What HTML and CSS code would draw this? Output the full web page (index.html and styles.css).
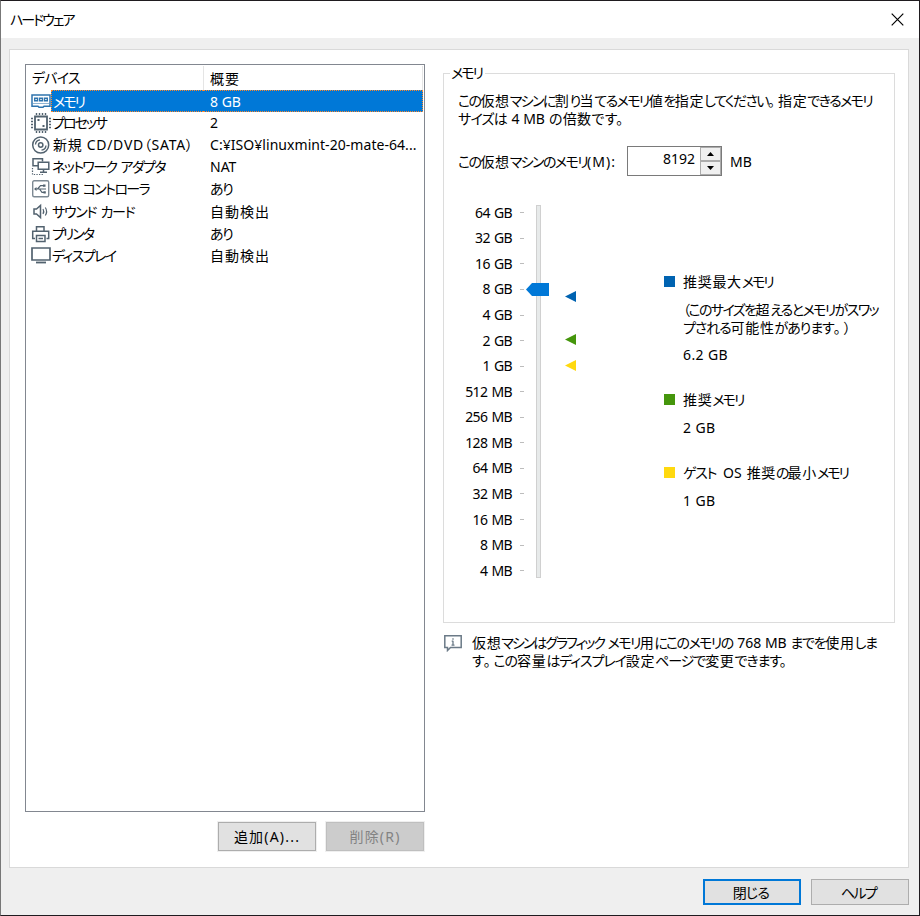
FILE: index.html
```html
<!DOCTYPE html>
<html lang="ja">
<head>
  <meta charset="UTF-8" />
  <title>ハードウェア</title>
  <link rel="stylesheet" href="styles.css">
</head>
<body>
  <div class="window">
    <header class="titlebar">
      <span class="kana">ハードウェア</span>
      <svg width="13" height="13" viewBox="0 0 13 13"><path d="M.7.7l11.6 11.6M12.3.7L.7 12.3" stroke="#000" stroke-width="1.2" fill="none"/></svg>
    </header>

    <main class="panel">
      <section class="left">
        <div class="list">
          <div class="row head">
            <div class="name loose">デバイス</div>
            <div class="value kanji">概要</div>
          </div>
          <div class="row selected">
            <svg class="icon" width="20" height="22" viewBox="0 0 20 22"><path d="M1 5h18v11.2h-6l-1 1H8l-1-1H1z" fill="#fff" stroke="#2f74ad" stroke-width="1.5"/><path d="M3.7 8.2h2.8v2.6H3.7zM8.6 8.2h2.8v2.6H8.6zM13.5 8.2h2.8v2.6h-2.8z" fill="#fff" stroke="#2f74ad" stroke-width="1.4"/><path d="M2 13.5h16" stroke="#8fb4d3"/></svg>
            <div class="name kana">メモリ</div>
            <div class="value">8 GB</div>
          </div>
          <div class="row">
            <svg class="icon" width="20" height="22" viewBox="0 0 20 22"><path d="M4 4.5h12v13H4z" fill="#fff" stroke="#52626f" stroke-width="1.8"/><path d="M5.5 1v2M8.5 1v2M11.5 1v2M14.5 1v2M5.5 19v2M8.5 19v2M11.5 19v2M14.5 19v2M0 6.5h2M0 9.5h2M0 12.5h2M0 15.5h2M18 6.5h2M18 9.5h2M18 12.5h2M18 15.5h2" stroke="#52626f" stroke-width="1.4"/><path d="M6.5 7h2v2h-2zM11.5 13h2v2h-2z" fill="#52626f"/></svg>
            <div class="name kana">プロセッサ</div>
            <div class="value">2</div>
          </div>
          <div class="row">
            <svg class="icon" width="20" height="22" viewBox="0 0 20 22"><g fill="none" stroke="#52626f"><circle cx="9.7" cy="11" r="8" stroke-width="1.5"/><circle cx="9.7" cy="11" r="2.2" stroke-width="1.5"/><path d="M4.5 10.5a5 5 0 0 1 4.5-4.6M15 11.5a5 5 0 0 1-4.5 4.6" stroke-width="1.3"/></g></svg>
            <div class="name drive">新規 CD/DVD（SATA）</div>
            <div class="value path">C:¥ISO¥linuxmint-20-mate-64...</div>
          </div>
          <div class="row">
            <svg class="icon" width="20" height="22" viewBox="0 0 20 22"><g fill="none" stroke="#52626f" stroke-width="1.5"><path d="M7 9.7H2V2.8h9.5v2.7"/><path d="M7.2 6.2h10.6v7H7.2zM12.5 13v3M9 16.2h7"/><path d="M1.5 12v6.5h11" stroke-width="1.2" stroke-dasharray="1.3 1.3"/></g></svg>
            <div class="name tight spaced">ネットワーク アダプタ</div>
            <div class="value">NAT</div>
          </div>
          <div class="row">
            <svg class="icon" width="20" height="22" viewBox="0 0 20 22"><rect x="1.7" y="2.8" width="16" height="16" rx="1.5" fill="#fff" stroke="#7d8993" stroke-width="1.4"/><path d="M4 11h11M6.5 11l3-3.3h3M8.5 11l2.5 3.3h2" fill="none" stroke="#52626f" stroke-width="1.2"/><path d="M5.5 9v4L3 11zM12 6.5h2.5v2.3H12zM12.5 13.2h2.3v2.3h-2.3z" fill="#52626f"/></svg>
            <div class="name">USB <span class="tight">コントローラ</span></div>
            <div class="value tight">あり</div>
          </div>
          <div class="row">
            <svg class="icon" width="20" height="22" viewBox="0 0 20 22"><g fill="none" stroke="#52626f"><path d="M3 8h2.5l4-3.5v12l-4-3.5H3z" stroke-width="1.5"/><path d="M12 8q1.5 2.5 0 5M14.3 6.5q2.6 4 0 8" stroke-width="1.2"/></g></svg>
            <div class="name medium spaced">サウンド カード</div>
            <div class="value kanji">自動検出</div>
          </div>
          <div class="row">
            <svg class="icon" width="20" height="22" viewBox="0 0 20 22"><g fill="#fff" stroke="#52626f" stroke-width="1.5"><path d="M5.5 8V3.7h7.5V8"/><path d="M4 15.5H1.7V8.2h16v7.3H15.5"/><path d="M5.5 12.5h8.5v6H5.5zM7.5 15.5h4.5"/></g></svg>
            <div class="name kana">プリンタ</div>
            <div class="value tight">あり</div>
          </div>
          <div class="row">
            <svg class="icon" width="20" height="22" viewBox="0 0 20 22"><path d="M1 3h18v12H1z" fill="#fff" stroke="#52626f" stroke-width="1.7"/><path d="M5 17.5h10" stroke="#52626f" stroke-width="1.8"/></svg>
            <div class="name tight">ディスプレイ</div>
            <div class="value kanji">自動検出</div>
          </div>
        </div>
        <div class="list-buttons">
          <button class="btn framed">追加(A)...</button>
          <button class="btn framed" disabled>削除(R)</button>
        </div>
      </section>

      <section class="right">
        <fieldset class="group">
          <legend class="kana">メモリ</legend>
          <p class="desc">
            <span class="tight">この<b>仮想</b>マシンに<b>割</b>り<b>当</b>てるメモリ<b>値</b>を<b>指定</b>してください<i>。</i><b>指定</b>できるメモリ</span><br>
            <span class="loose">サイズは</span> <span class="unit">4 MB</span> <span class="multiple">の倍数です。</span>
          </p>

          <div class="amount">
            <label><span class="tight">この<b>仮想</b>マシンのメモリ</span>(M):</label>
            <div class="spin">
              <span class="num">8192</span>
              <div class="arrows">
                <div class="arrow"><svg width="7" height="4" viewBox="0 0 7 4"><path d="M0 4L3.5 0 7 4z"/></svg></div>
                <div class="arrow"><svg width="7" height="4" viewBox="0 0 7 4"><path d="M0 0l3.5 4L7 0z"/></svg></div>
              </div>
            </div>
            <span class="mb">MB</span>
          </div>

          <div class="chart">
            <ul class="scale">
              <li>64 GB</li>
              <li>32 GB</li>
              <li>16 GB</li>
              <li>8 GB</li>
              <li>4 GB</li>
              <li>2 GB</li>
              <li>1 GB</li>
              <li>512 MB</li>
              <li>256 MB</li>
              <li>128 MB</li>
              <li>64 MB</li>
              <li>32 MB</li>
              <li>16 MB</li>
              <li>8 MB</li>
              <li>4 MB</li>
            </ul>
            <div class="track">
              <svg class="thumb" width="23" height="13" viewBox="0 0 23 13"><path d="M0 6.5L6 0h17v13H6z" fill="#0078d7"/></svg>
            </div>
            <div class="marks">
              <svg class="max" width="11" height="11" viewBox="0 0 11 11"><path d="M0 5.5L11 0v11z" fill="#0063b1"/></svg>
              <svg class="rec" width="11" height="11" viewBox="0 0 11 11"><path d="M0 5.5L11 0v11z" fill="#45960c"/></svg>
              <svg class="min" width="11" height="11" viewBox="0 0 11 11"><path d="M0 5.5L11 0v11z" fill="#ffd90f"/></svg>
            </div>
            <dl class="legend">
              <dt class="blue kana"><b>推奨最大</b>メモリ</dt>
              <dd class="note"><span class="tight">（このサイズを<b>超</b>えるとメモリがスワッ</span><br><span class="small">プされる<b>可能性</b>があります<i>。</i>）</span></dd>
              <dd>6.2 GB</dd>
              <dt class="green kana"><b>推奨</b>メモリ</dt>
              <dd>2 GB</dd>
              <dt class="yellow kana"><span class="medium">ゲスト</span><span class="os">OS</span><b>推奨</b>の<b>最小</b>メモリ</dt>
              <dd>1 GB</dd>
            </dl>
          </div>
        </fieldset>

        <div class="info">
          <svg width="18" height="17" viewBox="0 0 18 17"><path d="M.8.8h16.4v11.7H6.5l-3 3v-3H.8z" fill="#fff" stroke="#6b7a87" stroke-width="1.5"/><path d="M9 3.2v1.6M9 5.8v4.7M7.5 10.2h3M7.7 6.2H9" stroke="#6b7a87" stroke-width="1.3"/></svg>
          <p>
            <span class="kana"><b>仮想</b>マシンはグラフィック</span> <span class="tight">メモリ<b>用</b>にこのメモリの</span> <span class="video">768 MB</span> <span class="medium">までを<b>使用</b>しま</span><br>
            <span class="small">す<i>。</i>この<b>容量</b>はディスプレイ<b>設定</b>ページで<b>変更</b>できます。</span>
          </p>
        </div>
      </section>
    </main>

    <footer class="actions">
      <button class="btn primary">閉じる</button>
      <button class="btn help">ヘルプ</button>
    </footer>
  </div>
</body>
</html>
```
FILE: styles.css
```css
* {
  box-sizing: border-box;
}
body {
  margin: 0;
  font-family: "Noto Sans", "Noto Sans CJK JP", sans-serif;
  font-size: 14px;
  line-height: 18px;
  color: #000;
  font-feature-settings: "palt";
}

/* kana are set tighter than kanji */
.loose { letter-spacing: -0.8px; }
.small { letter-spacing: -1.1px; }
.medium { letter-spacing: -1.3px; }
.tight { letter-spacing: -1.6px; }
.kana { letter-spacing: -2px; }
.kanji { letter-spacing: 1px; }
.spaced { word-spacing: 2px; }
b {
  font-weight: normal;
  letter-spacing: 0.7px;
}
i {
  font-style: normal;
  letter-spacing: 3px;
}

.window {
  width: 920px;
  height: 916px;
  display: flex;
  flex-direction: column;
  background: #efefef;
  border: 1px solid #1f1b1f;
  border-left-color: #777;
}
.titlebar {
  height: 37px;
  background: #fff;
  display: flex;
  justify-content: space-between;
  align-items: center;
  padding: 0 15px 0 9px;
}
.panel {
  width: 900px;
  height: 819px;
  margin: 11px 0 0 8px;
  background: #fff;
  border: 1px solid #d9d9d9;
  display: flex;
  padding: 14px 13px 0 15px;
  gap: 18px;
}
.left {
  width: 400px;
}

/* device list */
.list {
  height: 748px;
  border: 1px solid #828790;
}
.row {
  height: 22.1px;
  display: flex;
  align-items: center;
  padding-left: 5px;
}
.row .name {
  width: 152px;
  padding-left: 1px;
  white-space: nowrap;
}
.row .icon {
  flex: none;
}
.row .value {
  flex: 1;
  padding-left: 7px;
  white-space: nowrap;
  height: 22px;
  line-height: 22px;
}
.row .drive {
  letter-spacing: 0.7px;
  padding-left: 2px;
}
.row .path {
  letter-spacing: 0.05px;
}
.row.head {
  height: 25px;
}
.row.head .name {
  width: 172px;
}
.row.head .value {
  padding-left: 6px;
  border-left: 1px solid #e5e5e5;
  border-right: 1px solid #e5e5e5;
  margin-right: 1px;
  height: 24px;
  line-height: 26px;
}
.row.selected .name,
.row.selected .value {
  background: #0078d7;
  color: #fff;
  height: 22px;
  line-height: 21px;
  border: 1px dotted #ff8728;
  border-right: 0;
}
.row.selected .value {
  border-left: 0;
  border-right: 1px dotted #ff8728;
  margin-right: 1px;
}
.list-buttons {
  display: flex;
  justify-content: flex-end;
  gap: 10px;
  margin-top: 10px;
  padding-right: 1px;
}
.btn {
  width: 98px;
  height: 26px;
  padding: 0;
  background: #e1e1e1;
  border: 1px solid #adadad;
  font-family: inherit;
  font-size: 14px;
  font-feature-settings: inherit;
  color: #000;
}
.btn.framed {
  height: 29px;
  padding-bottom: 2px;
  outline: 1px solid #efefef;
  letter-spacing: 1.2px;
}
.btn:disabled {
  background: #ccc;
  border-color: #bfbfbf;
  color: #838383;
}
.btn.primary {
  border: 2px solid #0078d7;
  letter-spacing: -0.8px;
  padding-right: 2px;
}
.btn.help {
  letter-spacing: -1.6px;
  padding-right: 3px;
}

/* memory settings */
.right {
  width: 452px;
}
.group {
  margin: 0;
  height: 559px;
  padding: 0 0 0 14px;
  border: 1px solid #dcdcdc;
  min-width: 0;
}
.group legend {
  margin-left: -8px;
  padding: 0 3px 0 1px;
}
.desc {
  margin: 10px 0 0;
  white-space: nowrap;
}
.desc .unit {
  margin: 0 1px;
  letter-spacing: -0.4px;
  word-spacing: 1px;
}
.desc .multiple {
  letter-spacing: 0.3px;
}
.amount {
  display: flex;
  align-items: center;
  height: 30px;
  margin-top: 18px;
}
.amount label {
  width: 169px;
  padding-top: 1px;
  white-space: nowrap;
  letter-spacing: 1px;
}
.amount .mb {
  padding-top: 1px;
}
.spin {
  width: 95px;
  height: 30px;
  border: 1px solid #7a7a7a;
  display: flex;
  justify-content: flex-end;
  margin-right: 8px;
}
.spin .num {
  line-height: 24px;
  margin-right: 5px;
}
.arrows {
  width: 21px;
  background: #f0f0f0;
  display: flex;
  flex-direction: column;
}
.arrow {
  flex: 1;
  border: 1px solid #acacac;
  display: flex;
  align-items: center;
  justify-content: center;
}
.chart {
  display: flex;
  margin-top: 24px;
}
.scale {
  list-style: none;
  margin: 0;
  padding: 0;
  width: 66px;
  flex: none;
}
.scale li {
  height: 25.57px;
  line-height: 26px;
  display: flex;
  align-items: center;
  justify-content: flex-end;
  gap: 8px;
  letter-spacing: -0.6px;
  word-spacing: 1px;
}
.scale li::after {
  content: "";
  width: 4px;
  height: 1px;
  background: #bdbdbd;
}
.track {
  position: relative;
  flex: none;
  width: 5px;
  height: 373px;
  margin: 5px 0 0 12px;
  background: #e7eaea;
  border: 1px solid #d0d0d0;
}
.thumb {
  position: absolute;
  left: -11px;
  top: 77px;
}
.marks {
  display: flex;
  flex: none;
  flex-direction: column;
  margin-left: 24px;
  padding-top: 91px;
}
.marks .rec {
  margin-top: 32px;
}
.marks .min {
  margin-top: 15px;
}
.legend {
  margin: 73px 0 0 88px;
  white-space: nowrap;
}
.legend dt {
  display: flex;
  align-items: center;
  height: 18px;
}
.legend dt::before {
  content: "";
  width: 11px;
  height: 11px;
  margin: 0 8px 1px 0;
}
.legend .blue::before { background: #0063b1; }
.legend .green::before { background: #45960c; }
.legend .yellow::before { background: #ffd90f; }
.legend .os {
  margin: 0 5px 0 7px;
  letter-spacing: 0;
}
.legend dd {
  margin: 10px 0 27px 19px;
  letter-spacing: 0.4px;
}
.legend .note {
  margin-bottom: 0;
}
.legend .note + dd {
  margin-top: 9px;
}
.info {
  display: flex;
  gap: 10px;
  margin-top: 11px;
  padding-left: 1px;
}
.info svg {
  flex: none;
  margin-top: 1px;
}
.info p {
  margin: 0;
  white-space: nowrap;
}
.info .video {
  margin-left: 1px;
}
.actions {
  display: flex;
  justify-content: flex-end;
  gap: 10px;
  padding: 11px 10px 0 0;
}
```
